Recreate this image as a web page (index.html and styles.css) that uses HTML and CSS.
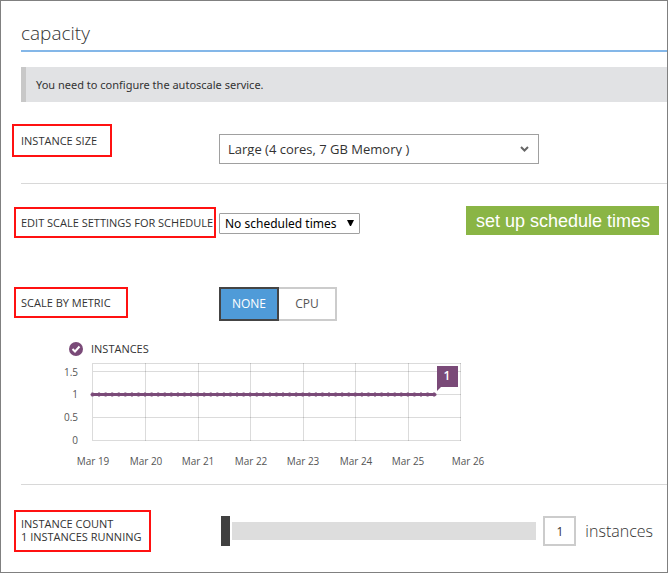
FILE: index.html
```html
<!DOCTYPE html>
<html lang="en">
<head>
<meta charset="utf-8">
<meta name="viewport" content="width=device-width, initial-scale=1">
<title>capacity</title>
<link rel="stylesheet" href="styles.css">
</head>
<body>
<main class="panel">
  <h1 class="title">capacity</h1>
  <p class="notice">You need to configure the autoscale service.</p>

  <section class="row row-size">
    <label class="label label-size" for="size">INSTANCE SIZE</label>
    <div class="picker picker-size">
      <select id="size"><option>Large (4 cores, 7 GB Memory )</option></select>
      <svg class="arrow" width="9" height="6" viewBox="0 0 9 6" aria-hidden="true"><path d="M1 1l3.500 3.500L8 1" fill="none" stroke="#666" stroke-width="2"/></svg>
    </div>
  </section>

  <section class="row row-schedule">
    <label class="label" for="schedule">EDIT SCALE SETTINGS FOR SCHEDULE</label>
    <div class="picker picker-schedule">
      <select id="schedule"><option>No scheduled times</option></select>
      <svg class="arrow" width="7" height="8" viewBox="0 0 7 8" aria-hidden="true"><path d="M0 0h7L4 6H3z" fill="#000"/></svg>
    </div>
    <button class="setup" type="button">set up schedule times</button>
  </section>

  <section class="row row-metric">
    <span class="label label-metric" id="metric">SCALE BY METRIC</span>
    <div class="segments" role="group" aria-labelledby="metric">
      <button class="segment segment-on" type="button" aria-pressed="true">NONE</button>
      <button class="segment" type="button" aria-pressed="false">CPU</button>
    </div>
  </section>

  <section class="chart">
    <h2 class="legend">
      <svg width="14" height="14" viewBox="0 0 14 14" aria-hidden="true"><circle cx="7" cy="7" r="7" fill="#7a4a78"/><path d="M3.500 7l2.500 2.500L10.500 4.500" fill="none" stroke="#fff" stroke-width="2"/></svg>
      INSTANCES
    </h2>
    <svg class="plot" viewBox="60 360 430 112" role="img" aria-label="Instances, March 19 to 26">
      <g fill="none" stroke="#000" stroke-opacity=".14" shape-rendering="crispEdges">
        <path d="M92.500 363.500H461M92.500 371.500H461M92.500 394.500H461M92.500 417.500H461M92.500 440.500H461"/>
        <path d="M92.500 363V441M145.500 363V441M198.500 363V441M250.500 363V441M303.500 363V441M355.500 363V441M408.500 363V441M460.500 363V441"/>
      </g>
      <path d="M91.500 394.500H436" stroke="#7a4a78" stroke-opacity=".5" stroke-width="5" stroke-dasharray="2 4.570"/>
      <path d="M92 394.500H435" stroke="#7a4a78" stroke-width="3" stroke-linecap="round"/>
      <path d="M437 366h21v21h-17l-4 4z" fill="#7a4a78"/>
      <text class="badge" x="447" y="380">1</text>
      <g class="ticks-y">
        <text x="78" y="376">1.5</text><text x="78" y="398">1</text><text x="78" y="421">0.5</text><text x="78" y="444">0</text>
      </g>
      <g class="ticks-x">
        <text x="93" y="465">Mar 19</text><text x="146" y="465">Mar 20</text><text x="198" y="465">Mar 21</text><text x="251" y="465">Mar 22</text><text x="303" y="465">Mar 23</text><text x="356" y="465">Mar 24</text><text x="408" y="465">Mar 25</text><text x="468" y="465">Mar 26</text>
      </g>
    </svg>
  </section>

  <section class="row row-count">
    <label class="label label-count" for="slider">INSTANCE COUNT<br>1 INSTANCES RUNNING</label>
    <div class="counter">
      <input class="slider" id="slider" type="range" min="1" max="20" value="1">
      <input class="count" id="count" type="text" value="1">
      <label class="unit" for="count">instances</label>
    </div>
  </section>
</main>
</body>
</html>
```
FILE: styles.css
```css
* { box-sizing: border-box; }

body {
  margin: 0;
  background: #fff;
  color: #333;
  font: 11px/13px "Open Sans", "Noto Sans", sans-serif;
}

button, input, select { font: inherit; color: inherit; margin: 0; border-radius: 0; }

.panel {
  min-height: 100vh;
  border: 1px solid #808080;
  padding: 20px 0 20px 20px;
}

.title {
  margin: 0;
  padding-bottom: 5px;
  border-bottom: 2px solid #84b7e8;
  font-size: 19px;
  font-weight: 300;
  line-height: 24px;
}

.notice {
  margin: 15px 0 22px;
  padding: 0 10px;
  border-left: 5px solid #c8c8c8;
  background: #e1e2e4;
  font-family: "Noto Sans", sans-serif;
  font-size: 11px;
  line-height: 35px;
}

.row {
  display: grid;
  grid-template-columns: 198px auto 1fr;
  align-items: start;
}

.label {
  justify-self: start;
  margin-left: -7px;
  padding: 6px 1px 6px 5px;
  border: 2px solid #f11;
  line-height: 17px;
  white-space: nowrap;
}

.picker { display: grid; align-items: center; }
.picker > * { grid-area: 1 / 1; }
.picker select {
  width: 100%;
  height: 100%;
  appearance: none;
  border: 1px solid #a0a0a0;
  background: #fff;
  font-size: 13px;
}
.arrow { justify-self: end; pointer-events: none; }

.row-size { padding-bottom: 19px; border-bottom: 1px solid #d8d8d8; }
.label-size { margin-left: -9px; padding: 6px 13px 6px 7px; }
.picker-size { width: 320px; height: 30px; margin-top: 10px; }
.picker-size select { padding: 0 8px; }
.picker-size .arrow { margin-right: 10px; }

.row-schedule { padding-top: 22px; }
.row-schedule .label { margin-top: 1px; padding-top: 5px; padding-bottom: 5px; }
.picker-schedule { width: 141px; height: 21px; margin-top: 7px; }
.picker-schedule select {
  padding: 0 5px;
  border-radius: 1px;
  color: #000;
  font-family: "Noto Sans", sans-serif;
  font-size: 12px;
}
.picker-schedule .arrow { margin-right: 6px; }
.setup {
  justify-self: end;
  height: 29px;
  margin-right: 8px;
  padding: 0 9px 0 10px;
  border: 0;
  background: #8ab545;
  color: #fff;
  font: 18px/28px "Liberation Sans", Arial, sans-serif;
}

.row-metric { padding-top: 49px; }
.label-metric { padding: 5px 15px 5px 5px; }
.segments { display: flex; }
.segment {
  width: 58px;
  height: 34px;
  padding: 0 0 2px;
  border: 2px solid #ccc;
  border-left: 0;
  background: #fff;
  color: #555;
  font-size: 12px;
}
.segment-on {
  width: 60px;
  border: 2px solid #444;
  background: #4f9bd8;
  color: #fff;
}

.chart {
  padding: 20px 0 12px;
  border-bottom: 1px solid #d8d8d8;
}
.legend {
  display: flex;
  align-items: center;
  gap: 8px;
  margin: 0 0 4px 48px;
  font-size: 11px;
  font-weight: 400;
  line-height: 15px;
}
.plot { display: block; width: 430px; margin-left: 39px; }
.ticks-x, .ticks-y { fill: #555; font-size: 10px; }
.ticks-x { text-anchor: middle; }
.ticks-y { text-anchor: end; }
.badge { fill: #fff; font-size: 12px; font-weight: 600; text-anchor: middle; }

.row-count { padding-top: 25px; grid-template-columns: 198px 1fr; }
.label-count { padding: 5px 8px 7px 5px; line-height: 13px; }
.counter { display: flex; align-items: center; padding: 6px 14px 0 2px; }
.slider {
  flex: 1;
  min-width: 80px;
  height: 18px;
  appearance: none;
  background: #ddd;
}
.slider::-webkit-slider-thumb {
  appearance: none;
  width: 9px;
  height: 30px;
  background: #404040;
  box-shadow: 0 0 0 2px #fff;
}
.count {
  width: 33px;
  height: 30px;
  margin: 0 9px 0 7px;
  padding: 0;
  border: 2px solid #ccc;
  background: #fff;
  font-size: 12px;
  text-align: center;
}
.unit { font-size: 16px; font-weight: 300; line-height: 24px; }
```
